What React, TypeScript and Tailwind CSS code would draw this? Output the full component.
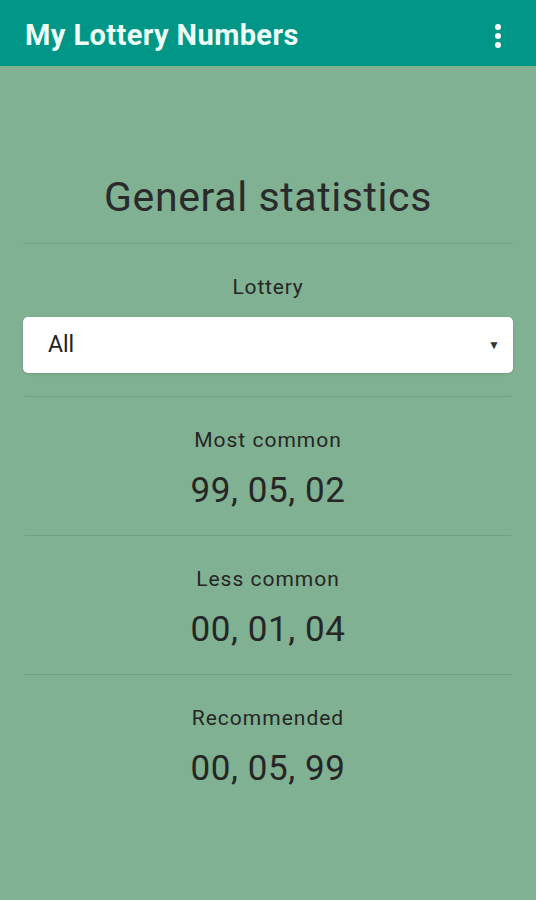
import React from "react";

const stats = [
  { label: "Most common", value: "99, 05, 02" },
  { label: "Less common", value: "00, 01, 04" },
  { label: "Recommended", value: "00, 05, 99" },
];

const App: React.FC = () => {
  return (
    <div className="min-h-screen bg-[#80b192] font-['Roboto',sans-serif] text-[#262626]">
      <header className="h-[66px] bg-[#009688] flex items-center justify-between pl-[25px] pr-[35px]">
        <h1 className="pt-[6px] text-[29px] font-bold tracking-[0.4px] text-[#eefcf6]">My Lottery Numbers</h1>
        <div className="flex flex-col gap-[3px] pt-[6px]">
          <span className="w-[6px] h-[6px] rounded-full bg-white" />
          <span className="w-[6px] h-[6px] rounded-full bg-white" />
          <span className="w-[6px] h-[6px] rounded-full bg-white" />
        </div>
      </header>

      <main className="px-[23px]">
        <h2 className="pt-[105px] pb-[20px] text-center text-[41px] tracking-[0.6px] leading-[52px] text-[#2a2a2a]">
          General statistics
        </h2>
        <div className="border-t border-[#72a184]" />

        <div className="pt-[31px] pb-[23px]">
          <p className="text-center text-[21px] tracking-[0.8px] leading-[24px]">Lottery</p>
          <div className="mt-[18px] h-[56px] rounded-[5px] bg-white flex items-center justify-between pl-[25px] pr-[13px] shadow-sm">
            <span className="text-[23px] text-[#222]">All</span>
            <span className="text-[12px] text-[#333]">▼</span>
          </div>
        </div>

        {stats.map((s) => (
          <div key={s.label} className="border-t border-[#72a184] mx-[2px] pt-[30px] pb-[19px] text-center">
            <p className="text-[21px] tracking-[1px] leading-[26px]">{s.label}</p>
            <p className="mt-[13px] text-[35px] tracking-[0.6px] leading-[50px]">{s.value}</p>
          </div>
        ))}
      </main>
    </div>
  );
};

export default App;
